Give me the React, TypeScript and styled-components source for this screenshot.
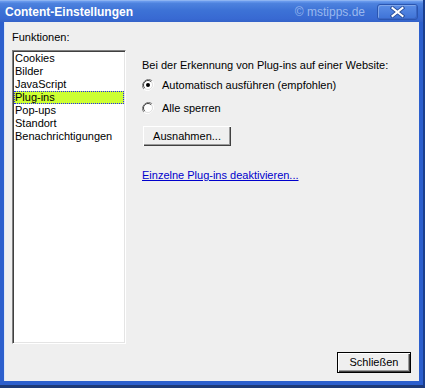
import React from 'react';
import styled, { createGlobalStyle } from 'styled-components';

const GlobalStyle = createGlobalStyle`
  html, body {
    margin: 0;
    padding: 0;
    background: #ffffff;
  }
  body {
    font-family: "Liberation Sans", Arial, sans-serif;
    font-size: 11px;
    color: #000000;
  }
`;

const Frame = styled.div`
  width: 425px;
  height: 388px;
  box-sizing: border-box;
  display: flex;
  flex-direction: column;
  background: #2c5fcd;
  border-right: 2px solid #1a3f8f;
  border-bottom: 3px solid #1d3a78;
`;

const TitleBar = styled.div`
  height: 22px;
  flex-shrink: 0;
  display: flex;
  align-items: center;
  padding: 0 5px 0 5px;
  background: linear-gradient(#6e9ff0 0%, #4d82de 12%, #3d72d6 45%, #3869d2 85%, #3462c8 100%);
  border-top: 1px solid #8db4f2;
  box-sizing: border-box;
`;

const Title = styled.span`
  font-family: "Liberation Sans", Arial, sans-serif;
  font-weight: bold;
  font-size: 12px;
  color: #ffffff;
  flex: 1;
`;

const Watermark = styled.span`
  font-family: "Liberation Sans", Arial, sans-serif;
  font-size: 12px;
  color: #9ab8ee;
  margin-right: 12px;
`;

const CloseButton = styled.div`
  width: 41px;
  height: 16px;
  margin-top: 1px;
  box-sizing: border-box;
  border: 1px solid #2a55b0;
  border-radius: 3px;
  box-shadow: inset 1px 1px 0 #7fa6ea, inset -1px -1px 0 #3a66c4;
  background: linear-gradient(#5b8ee6, #3e72d6);
  display: flex;
  align-items: center;
  justify-content: center;
`;

const Body = styled.div`
  flex: 1;
  margin: 0 4px 4px 4px;
  background: #efefef;
  border-left: 1px solid #dbe6f8;
  display: flex;
  flex-direction: column;
  padding: 9px 8px 8px 7px;
  box-sizing: border-box;
`;

const Content = styled.div`
  flex: 1;
  display: flex;
  gap: 16px;
`;

const LeftColumn = styled.div`
  display: flex;
  flex-direction: column;
  width: 114px;
`;

const Label = styled.div`
  line-height: 13px;
  margin-bottom: 6px;
`;

const ListBox = styled.div`
  flex: 1;
  background: #ffffff;
  border-top: 1px solid #808080;
  border-left: 1px solid #808080;
  border-right: 1px solid #ffffff;
  border-bottom: 1px solid #ffffff;
  box-shadow: inset 1px 1px 0 #404040, inset -1px -1px 0 #e4e4e4;
  padding: 1px;
`;

const ListItem = styled.div<{ $selected?: boolean }>`
  line-height: 13px;
  height: 13px;
  padding-left: 1px;
  box-sizing: border-box;
  background: ${(p) => (p.$selected ? '#ccff33' : 'transparent')};
  outline: ${(p) => (p.$selected ? '1px dotted #2020ff' : 'none')};
  outline-offset: -1px;
  white-space: nowrap;
`;

const RightColumn = styled.div`
  flex: 1;
  display: flex;
  flex-direction: column;
  align-items: flex-start;
  padding-top: 28px;
`;

const Text = styled.div`
  line-height: 13px;
`;

const RadioRow = styled.label<{ $gap: number }>`
  display: flex;
  align-items: center;
  height: 16px;
  margin-top: ${(p) => p.$gap}px;
  gap: 8px;
  line-height: 13px;
`;

const Button = styled.div<{ $default?: boolean }>`
  box-sizing: border-box;
  display: flex;
  align-items: center;
  justify-content: center;
  background: #efefef;
  border: 1px solid ${(p) => (p.$default ? '#000000' : 'transparent')};
  box-shadow: inset 1px 1px 0 #ffffff, inset -1px -1px 0 #404040, inset -2px -2px 0 #9a9a9a;
  line-height: 13px;
`;

const ExceptionsButton = styled(Button)`
  width: 90px;
  height: 22px;
  margin-top: 9px;
`;

const Link = styled.a`
  color: #0000cc;
  text-decoration: underline;
  line-height: 13px;
  margin-top: 22px;
  cursor: pointer;
`;

const Footer = styled.div`
  display: flex;
  justify-content: flex-end;
  margin-top: 8px;
`;

const CloseDialogButton = styled(Button)`
  width: 74px;
  height: 21px;
`;

function Radio({ checked }: { checked?: boolean }) {
  return (
    <svg width="12" height="12" viewBox="0 0 12 12">
      <path d="M10.2 1.8 A6 6 0 0 0 1.8 10.2" fill="none" stroke="#808080" strokeWidth="1" />
      <path d="M1.8 10.2 A6 6 0 0 0 10.2 1.8" fill="none" stroke="#ffffff" strokeWidth="1" />
      <circle cx="6" cy="6" r="4.5" fill="#ffffff" />
      <path d="M9.2 2.8 A4.5 4.5 0 0 0 2.8 9.2" fill="none" stroke="#404040" strokeWidth="1" />
      <path d="M2.8 9.2 A4.5 4.5 0 0 0 9.2 2.8" fill="none" stroke="#dfdfdf" strokeWidth="1" />
      {checked && <circle cx="6" cy="6" r="2" fill="#000000" />}
    </svg>
  );
}

function CloseIcon() {
  return (
    <svg width="15" height="12" viewBox="0 0 15 12">
      <path d="M2.5 2 L12.5 10 M12.5 2 L2.5 10" stroke="#2a4f9c" strokeWidth="3.8" strokeLinecap="square" />
      <path d="M2.5 2 L12.5 10 M12.5 2 L2.5 10" stroke="#ffffff" strokeWidth="2" strokeLinecap="square" />
    </svg>
  );
}

const features = ['Cookies', 'Bilder', 'JavaScript', 'Plug-ins', 'Pop-ups', 'Standort', 'Benachrichtigungen'];

export default function App() {
  return (
    <>
      <GlobalStyle />
      <Frame>
        <TitleBar>
          <Title>Content-Einstellungen</Title>
          <Watermark>© mstipps.de</Watermark>
          <CloseButton>
            <CloseIcon />
          </CloseButton>
        </TitleBar>
        <Body>
          <Content>
            <LeftColumn>
              <Label>Funktionen:</Label>
              <ListBox>
                {features.map((f) => (
                  <ListItem key={f} $selected={f === 'Plug-ins'}>
                    {f}
                  </ListItem>
                ))}
              </ListBox>
            </LeftColumn>
            <RightColumn>
              <Text>Bei der Erkennung von Plug-ins auf einer Website:</Text>
              <RadioRow $gap={5}>
                <Radio checked />
                <span>Automatisch ausführen (empfohlen)</span>
              </RadioRow>
              <RadioRow $gap={7}>
                <Radio />
                <span>Alle sperren</span>
              </RadioRow>
              <ExceptionsButton>Ausnahmen...</ExceptionsButton>
              <Link>Einzelne Plug-ins deaktivieren...</Link>
            </RightColumn>
          </Content>
          <Footer>
            <CloseDialogButton $default>Schließen</CloseDialogButton>
          </Footer>
        </Body>
      </Frame>
    </>
  );
}
